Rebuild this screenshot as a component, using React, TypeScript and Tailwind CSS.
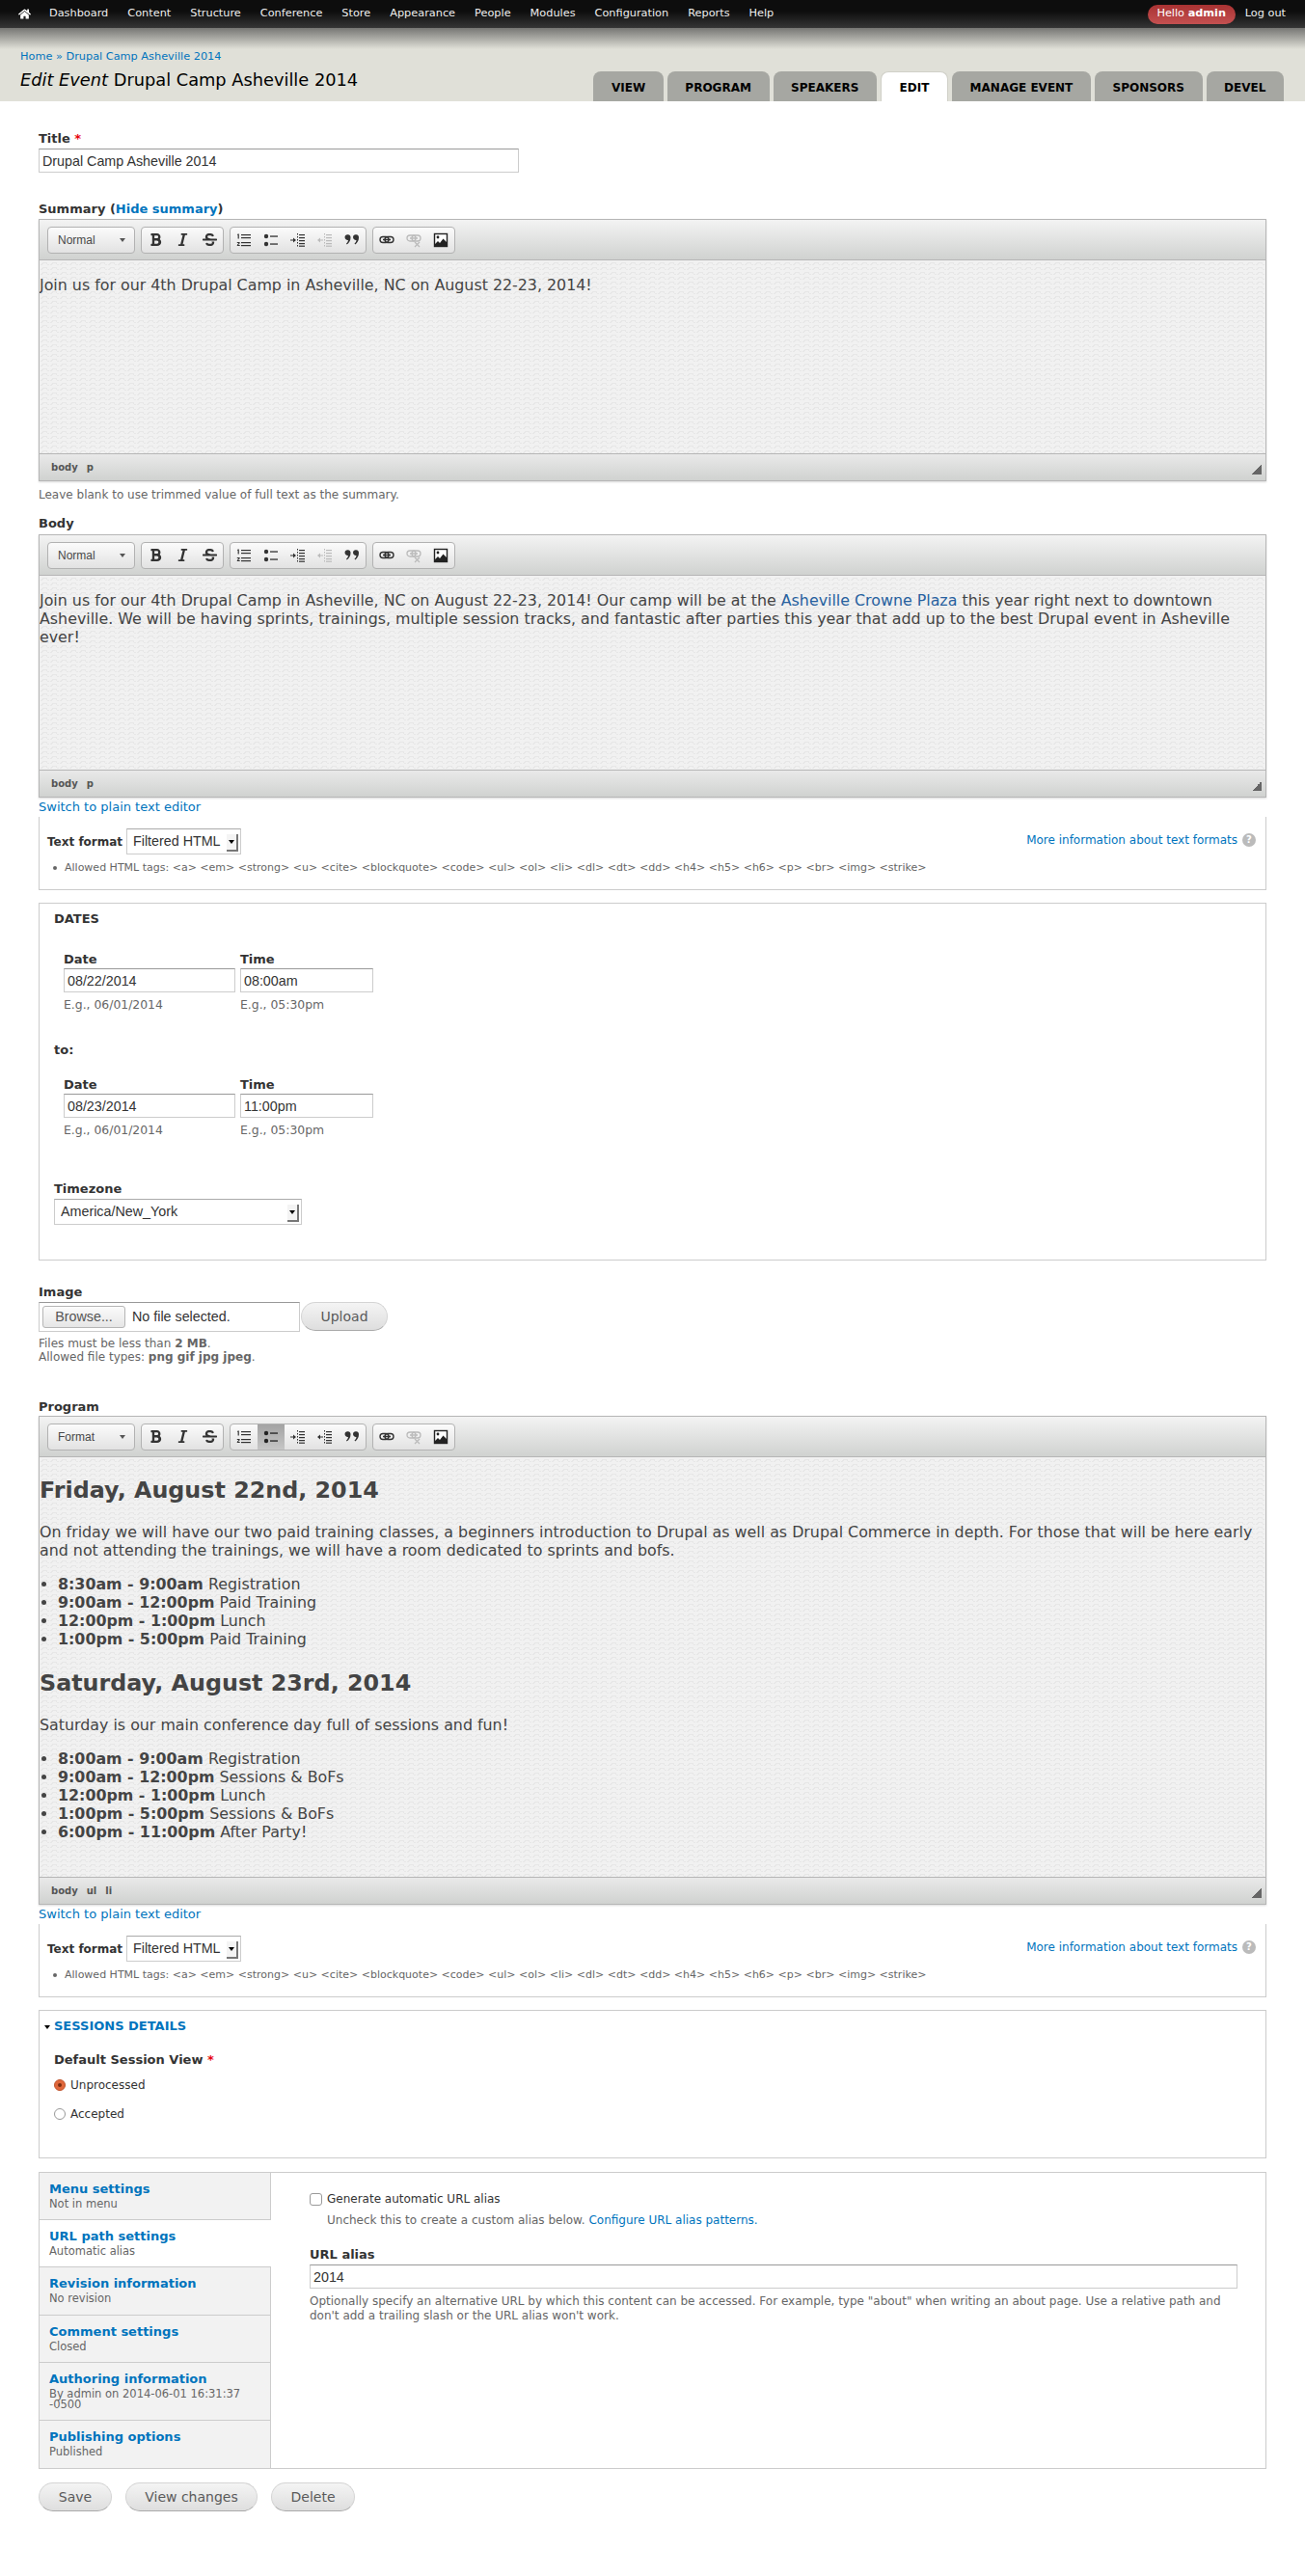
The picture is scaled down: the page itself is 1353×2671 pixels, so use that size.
import type { ReactNode } from 'react';
import { FaBold, FaHome, FaItalic, FaStrikethrough } from 'react-icons/fa';

const navItems = ['Dashboard', 'Content', 'Structure', 'Conference', 'Store', 'Appearance', 'People', 'Modules', 'Configuration', 'Reports', 'Help'];
const tabs = ['VIEW', 'PROGRAM', 'SPEAKERS', 'EDIT', 'MANAGE EVENT', 'SPONSORS', 'DEVEL'];
const allowedTags = 'Allowed HTML tags: <a> <em> <strong> <u> <cite> <blockquote> <code> <ul> <ol> <li> <dl> <dt> <dd> <h4> <h5> <h6> <p> <br> <img> <strike>';

const inputClass = "block h-[25px] border border-[#ccc] border-t-[#999] bg-white px-[3px] font-['Liberation_Sans',sans-serif] text-[14.3px] text-[#333] outline-none";

function Label({ children, className = '' }: { children: ReactNode; className?: string }) {
  return <div className={`text-[13px] leading-[14px] font-bold text-[#333] ${className}`}>{children}</div>;
}

function Hint({ children, className = '' }: { children: ReactNode; className?: string }) {
  return <div className={`text-[12px] leading-[14px] text-[#666] ${className}`}>{children}</div>;
}

function IconList() {
  return (
    <svg width="16" height="16" viewBox="0 0 16 16" fill="currentColor">
      <path d="M1.6 1.5h1.2v5H1.6V2.7L.8 3zM.8 10h2.8v1.2L2 13h1.7v1H.8v-1l1.7-1.9H.8z" />
      <rect x="5" y="2" width="10" height="1.2" /><rect x="5" y="5" width="10" height="1.2" />
      <rect x="5" y="10" width="10" height="1.2" /><rect x="5" y="13" width="10" height="1.2" />
    </svg>
  );
}

function IconBullets() {
  return (
    <svg width="16" height="16" viewBox="0 0 16 16" fill="currentColor">
      <circle cx="3" cy="4" r="2.2" /><circle cx="3" cy="12" r="2.2" />
      <rect x="7" y="3.4" width="8" height="1.3" /><rect x="7" y="11.4" width="8" height="1.3" />
    </svg>
  );
}

function IconIndent({ flip = false }: { flip?: boolean }) {
  return (
    <svg width="16" height="16" viewBox="0 0 16 16" fill="currentColor">
      {flip ? <path d="M0 8l3-2.5V7.4h3v1.2H3v1.9z" /> : <path d="M6 8L3 5.5v1.9H0v1.2h3v1.9z" />}
      <path d="M7 1h1v1.5H7zM7 4h1v1.5H7zM7 7h1v1.5H7zM7 10h1v1.5H7zM7 13h1v1.5H7z" />
      <rect x="9" y="2" width="6" height="1.2" /><rect x="9" y="5" width="6" height="1.2" />
      <rect x="9" y="8" width="6" height="1.2" /><rect x="9" y="11" width="6" height="1.2" /><rect x="9" y="13.6" width="6" height="1.2" />
    </svg>
  );
}

function IconQuote() {
  return (
    <svg width="16" height="16" viewBox="0 0 16 16" fill="currentColor">
      <path d="M.5 5a3 3 0 1 1 6 .4c0 3-1.7 5.6-3.8 7l-.7-.8c1.2-1.1 1.8-2.4 2-3.7A3 3 0 0 1 .5 5z" />
      <path d="M9 5a3 3 0 1 1 6 .4c0 3-1.7 5.6-3.8 7l-.7-.8c1.2-1.1 1.8-2.4 2-3.7A3 3 0 0 1 9 5z" />
    </svg>
  );
}

function IconLink() {
  return (
    <svg width="16" height="16" viewBox="0 0 16 16" fill="none" stroke="currentColor" strokeWidth="1.4">
      <rect x="1" y="4.5" width="9" height="6" rx="3" />
      <rect x="6" y="4.5" width="9" height="6" rx="3" />
      <path d="M4 7.5h8" />
    </svg>
  );
}

function IconUnlink() {
  return (
    <svg width="16" height="16" viewBox="0 0 16 16" fill="none" stroke="currentColor" strokeWidth="1.3">
      <rect x="1" y="3" width="9" height="6" rx="3" />
      <rect x="6" y="3" width="9" height="6" rx="3" />
      <path d="M4 6h8M9 10l5 5M14 10l-5 5" />
    </svg>
  );
}

function IconImage() {
  return (
    <svg width="16" height="16" viewBox="0 0 16 16">
      <rect x="1.5" y="1.5" width="13" height="13" fill="#fff" stroke="#222" strokeWidth="1.4" />
      <circle cx="5" cy="5" r="1.4" fill="#222" />
      <path d="M2 14v-2l3-3 2 2 3.5-4.5L14 10v4z" fill="#222" />
    </svg>
  );
}

function ToolButton({ children, active, disabled }: { children: ReactNode; active?: boolean; disabled?: boolean }) {
  const tone = active
    ? 'bg-[linear-gradient(#a3a3a3,#c6c6c6)] text-[#222]'
    : disabled
      ? 'text-[#bbb]'
      : 'text-[#333]';
  return <span className={`flex h-full w-[28px] items-center justify-center ${tone}`}>{children}</span>;
}

function ToolGroup({ children, className = '' }: { children: ReactNode; className?: string }) {
  return (
    <div className={`flex h-[28px] overflow-hidden rounded-[4px] border border-[#b2b2b2] bg-[linear-gradient(#fbfbfb,#e2e2e2)] ${className}`}>
      {children}
    </div>
  );
}

function Editor({ format, contentHeight, path, program, children }: { format: string; contentHeight: number; path: string[]; program?: boolean; children: ReactNode }) {
  return (
    <div className="border border-[#b6b6b6] shadow-[0_1px_2px_rgba(0,0,0,0.15)]">
      <div className="flex h-[42px] items-center gap-[6px] border-b border-[#b6b6b6] bg-[linear-gradient(#f3f3f3,#d0d2d0)] pl-[8px]">
        <ToolGroup className="w-[91px] items-center justify-between pr-[9px] pl-[10px] font-['Liberation_Sans',sans-serif] text-[12px] text-[#484848]">
          <span>{format}</span>
          <span className="h-0 w-0 border-x-[3.5px] border-t-[4px] border-x-transparent border-t-[#555]" />
        </ToolGroup>
        <ToolGroup>
          <ToolButton><FaBold size={15} /></ToolButton>
          <ToolButton><FaItalic size={15} /></ToolButton>
          <ToolButton><FaStrikethrough size={15} /></ToolButton>
        </ToolGroup>
        <ToolGroup>
          <ToolButton><IconList /></ToolButton>
          <ToolButton active={program}><IconBullets /></ToolButton>
          <ToolButton><IconIndent /></ToolButton>
          <ToolButton disabled={!program}><IconIndent flip /></ToolButton>
          <ToolButton><IconQuote /></ToolButton>
        </ToolGroup>
        <ToolGroup>
          <ToolButton><IconLink /></ToolButton>
          <ToolButton disabled><IconUnlink /></ToolButton>
          <ToolButton><IconImage /></ToolButton>
        </ToolGroup>
      </div>
      <div
        className="overflow-hidden bg-[#f1f1f1] bg-[conic-gradient(from_135deg_at_50%_0,#f1f1f1_90deg,transparent_0),conic-gradient(from_135deg_at_50%_0,#e7e7e7_90deg,transparent_0)] bg-size-[10px_5px] bg-position-[0_2px,0_0] text-[15.85px] leading-[19px] text-[#444]"
        style={{ height: contentHeight }}
      >
        {children}
      </div>
      <div className="relative flex h-[28px] items-center gap-[9px] border-t border-[#b6b6b6] bg-[linear-gradient(#e9e9e9,#d0d2d0)] pl-[12px] text-[10px] font-bold text-[#555]">
        {path.map(item => <span key={item}>{item}</span>)}
        <span className="absolute right-[4px] bottom-[6px] h-[10px] w-[10px] bg-[linear-gradient(135deg,transparent_50%,#666_50%)]" />
      </div>
    </div>
  );
}

function SelectBox({ value, className }: { value: string; className: string }) {
  return (
    <div className={`relative border border-[#ccc] border-t-[#aaa] ${className}`}>
      <select className="h-full w-full appearance-none bg-white pl-[6px] font-['Liberation_Sans',sans-serif] text-[14.3px] text-[#333] outline-none" defaultValue={value}>
        <option>{value}</option>
      </select>
      <span className="absolute top-[5px] right-[2px] flex h-[18px] w-[12px] items-center justify-center border-r-2 border-b-2 border-[#777] bg-[#f4f4f4]">
        <span className="h-0 w-0 border-x-[3px] border-t-[4px] border-x-transparent border-t-black" />
      </span>
    </div>
  );
}

function FilterBox() {
  return (
    <div className="h-[76px] border-x border-b border-[#ccc] pt-[12px] pr-[10px] pl-[8px]">
      <div className="flex items-center">
        <span className="w-[82px] text-[12px] font-bold text-[#333]">Text format</span>
        <SelectBox value="Filtered HTML" className="h-[27px] w-[119px]" />
        <a className="mt-[-4px] ml-auto text-[12px] text-[#0074bd]">More information about text formats</a>
        <span className="mt-[-4px] ml-[5px] flex h-[14px] w-[14px] items-center justify-center rounded-full bg-[#bbb] text-[10px] font-bold text-white">?</span>
      </div>
      <div className="mt-[7px] flex items-center pl-[6px] text-[11px] leading-[14px] text-[#666]">
        <span className="mr-[8px] h-[4px] w-[4px] rounded-full bg-[#666]" />
        <span>{allowedTags}</span>
      </div>
    </div>
  );
}

function DateFields({ date, time, className = '' }: { date: string; time: string; className?: string }) {
  return (
    <div className={`flex gap-[5px] pl-[25px] ${className}`}>
      <div>
        <Label>Date</Label>
        <input className={`${inputClass} mt-[2px] w-[178px]`} defaultValue={date} />
        <div className="mt-[6px] text-[12.4px] leading-[14px] text-[#666]">E.g., 06/01/2014</div>
      </div>
      <div>
        <Label>Time</Label>
        <input className={`${inputClass} mt-[2px] w-[138px]`} defaultValue={time} />
        <div className="mt-[6px] text-[12.4px] leading-[14px] text-[#666]">E.g., 05:30pm</div>
      </div>
    </div>
  );
}

function Pill({ children, className = '' }: { children: ReactNode; className?: string }) {
  return (
    <button className={`h-[30px] rounded-[15px] border border-[#d4d4d4] border-b-[#aaa] bg-[linear-gradient(#f4f4f4,#dedede)] text-[14px] text-[#5a5a5a] ${className}`}>
      {children}
    </button>
  );
}

function SideTab({ title, sub, active, last, height }: { title: string; sub: ReactNode; active?: boolean; last?: boolean; height: number }) {
  return (
    <div
      className={`border-[#ccc] pt-[10px] pl-[10px] ${last ? '' : 'border-b'} ${active ? 'bg-white' : 'border-r bg-[#f2f2f2]'}`}
      style={{ height }}
    >
      <div className="text-[13px] leading-[14px] font-bold text-[#0074bd]">{title}</div>
      <div className="mt-[3px] text-[11.5px] leading-[11px] text-[#666]">{sub}</div>
    </div>
  );
}

function ListRow({ time, text }: { time: string; text: string }) {
  return <li><strong>{time}</strong> {text}</li>;
}

export default function App() {
  return (
    <div className="min-h-[2671px] bg-white font-['DejaVu_Sans',sans-serif] text-[#333]">
      {/* toolbar */}
      <div className="flex h-[29px] items-center bg-[linear-gradient(#0d0d0d_40%,#353535)] pr-[20px] pl-[19px] text-[11.3px] text-[#eee]">
        <FaHome size={13} className="mr-[19px] text-white" />
        <div className="flex gap-[20px]">
          {navItems.map(item => <span key={item}>{item}</span>)}
        </div>
        <span className="ml-auto flex h-[20px] w-[91px] items-center justify-center rounded-[10px] bg-[linear-gradient(#a93232,#c45050)] text-white">
          Hello&nbsp;<b>admin</b>
        </span>
        <span className="ml-[10px]">Log out</span>
      </div>

      {/* page header */}
      <div className="flex h-[76px] items-end justify-between bg-[#e0e0d8] bg-[linear-gradient(#767673,#e0e0d8_22px)] pr-[22px] pl-[21px]">
        <div className="pb-[10px]">
          <div className="text-[11.3px] leading-[14px] text-[#0074bd]">Home » Drupal Camp Asheville 2014</div>
          <h1 className="mt-[5px] text-[17.8px] leading-[24px] text-black"><em>Edit Event</em> Drupal Camp Asheville 2014</h1>
        </div>
        <div className="flex gap-[4px]">
          {tabs.map(tab => (
            <div
              key={tab}
              className={`flex h-[31px] items-center rounded-t-[8px] px-[18.6px] pt-[2px] text-[12px] font-bold text-black ${tab === 'EDIT' ? 'border-x border-t border-[#d0d0c8] bg-white' : 'bg-[#a6a7a2]'}`}
            >
              {tab}
            </div>
          ))}
        </div>
      </div>

      <div className="px-[40px] pb-[67px]">
        <Label className="mt-[32px]">Title <span className="text-red-600">*</span></Label>
        <input className={`${inputClass} mt-[3px] w-[498px]`} defaultValue="Drupal Camp Asheville 2014" />

        <Label className="mt-[31px]">Summary (<a className="text-[#0074bd]">Hide summary</a>)</Label>
        <div className="mt-[3px]">
          <Editor format="Normal" contentHeight={200} path={['body', 'p']}>
            <p className="mt-[16px]">Join us for our 4th Drupal Camp in Asheville, NC on August 22-23, 2014!</p>
          </Editor>
        </div>
        <Hint className="mt-[7px]">Leave blank to use trimmed value of full text as the summary.</Hint>

        <Label className="mt-[16px]">Body</Label>
        <div className="mt-[4px]">
          <Editor format="Normal" contentHeight={201} path={['body', 'p']}>
            <p className="mt-[16px]">
              Join us for our 4th Drupal Camp in Asheville, NC on August 22-23, 2014! Our camp will be at the <a className="text-[#27619f]">Asheville Crowne Plaza</a> this year right next to downtown Asheville. We will be having sprints, trainings, multiple session tracks, and fantastic after parties this year that add up to the best Drupal event in Asheville ever!
            </p>
          </Editor>
        </div>
        <a className="block h-[20px] text-[13px] leading-[20px] text-[#0074bd]">Switch to plain text editor</a>
        <FilterBox />

        {/* dates */}
        <fieldset className="mt-[13px] border border-[#ccc] pt-[9px] pb-[36px] pl-[15px]">
          <Label className="uppercase">Dates</Label>
          <DateFields date="08/22/2014" time="08:00am" className="mt-[28px] -ml-[15px]" />
          <Label className="mt-[33px]">to:</Label>
          <DateFields date="08/23/2014" time="11:00pm" className="mt-[22px] -ml-[15px]" />
          <Label className="mt-[47px]">Timezone</Label>
          <SelectBox value="America/New_York" className="mt-[3px] h-[27px] w-[257px]" />
        </fieldset>

        {/* image */}
        <Label className="mt-[26px]">Image</Label>
        <div className="mt-[3px] flex">
          <div className="flex h-[31px] w-[271px] items-center border border-[#ccc] border-t-[#999] pl-[3px] font-['Liberation_Sans',sans-serif] text-[14.3px] text-[#333]">
            <span className="flex h-[23px] w-[86px] items-center justify-center rounded-[3px] border border-[#b5b5b5] bg-[linear-gradient(#fbfbfb,#e6e6e6)] text-[#555]">Browse...</span>
            <span className="ml-[7px]">No file selected.</span>
          </div>
          <Pill className="ml-px w-[90px]">Upload</Pill>
        </div>
        <Hint className="mt-[5px]">
          Files must be less than <b>2 MB</b>.<br />
          Allowed file types: <b>png gif jpg jpeg</b>.
        </Hint>

        <Label className="mt-[38px]">Program</Label>
        <div className="mt-[2px]">
          <Editor format="Format" contentHeight={435} path={['body', 'ul', 'li']} program>
            <h2 className="mt-[20px] text-[23.8px] leading-[28px] font-bold">Friday, August 22nd, 2014</h2>
            <p className="mt-[20px]">
              On friday we will have our two paid training classes, a beginners introduction to Drupal as well as Drupal Commerce in depth. For those that will be here early and not attending the trainings, we will have a room dedicated to sprints and bofs.
            </p>
            <ul className="mt-[16px] list-disc pl-[19px]">
              <ListRow time="8:30am - 9:00am" text="Registration" />
              <ListRow time="9:00am - 12:00pm" text="Paid Training" />
              <ListRow time="12:00pm - 1:00pm" text="Lunch" />
              <ListRow time="1:00pm - 5:00pm" text="Paid Training" />
            </ul>
            <h2 className="mt-[22px] text-[23.8px] leading-[28px] font-bold">Saturday, August 23rd, 2014</h2>
            <p className="mt-[20px]">Saturday is our main conference day full of sessions and fun!</p>
            <ul className="mt-[16px] list-disc pl-[19px]">
              <ListRow time="8:00am - 9:00am" text="Registration" />
              <ListRow time="9:00am - 12:00pm" text="Sessions & BoFs" />
              <ListRow time="12:00pm - 1:00pm" text="Lunch" />
              <ListRow time="1:00pm - 5:00pm" text="Sessions & BoFs" />
              <ListRow time="6:00pm - 11:00pm" text="After Party!" />
            </ul>
          </Editor>
        </div>
        <a className="block h-[20px] text-[13px] leading-[20px] text-[#0074bd]">Switch to plain text editor</a>
        <FilterBox />

        {/* sessions */}
        <fieldset className="mt-[13px] border border-[#ccc] pt-[9px] pb-[38px] pl-[15px]">
          <div className="relative text-[13px] leading-[14px] font-bold text-[#0074bd] uppercase">
            <span className="absolute top-[6px] -left-[10px] h-0 w-0 border-x-[3.5px] border-t-[4px] border-x-transparent border-t-black" />
            Sessions details
          </div>
          <Label className="mt-[21px]">Default Session View <span className="text-red-600">*</span></Label>
          <div className="mt-[12px] flex items-center text-[12px] leading-[14px]">
            <span className="mr-[5px] flex h-[12px] w-[12px] items-center justify-center rounded-full border border-[#c0562f] bg-[#e0673b]">
              <span className="h-[4px] w-[4px] rounded-full bg-[#7a2e12]" />
            </span>
            Unprocessed
          </div>
          <div className="mt-[16px] flex items-center text-[12px] leading-[14px]">
            <span className="mr-[5px] h-[12px] w-[12px] rounded-full border border-[#999] bg-white" />
            Accepted
          </div>
        </fieldset>

        {/* vertical tabs */}
        <div className="mt-[14px] flex h-[308px] border border-[#ccc]">
          <div className="w-[240px] shrink-0">
            <SideTab title="Menu settings" sub="Not in menu" height={49} />
            <SideTab title="URL path settings" sub="Automatic alias" active height={49} />
            <SideTab title="Revision information" sub="No revision" height={50} />
            <SideTab title="Comment settings" sub="Closed" height={49} />
            <SideTab title="Authoring information" sub="By admin on 2014-06-01 16:31:37 -0500" height={60} />
            <SideTab title="Publishing options" sub="Published" last height={49} />
          </div>
          <div className="flex-1 pt-[20px] pl-[40px] text-[12px] leading-[14px]">
            <div className="flex items-center gap-[5px]">
              <span className="h-[13px] w-[13px] rounded-[3px] border border-[#999] bg-white" />
              Generate automatic URL alias
            </div>
            <div className="mt-[8px] pl-[18px] text-[#666]">
              Uncheck this to create a custom alias below. <a className="text-[#0074bd]">Configure URL alias patterns.</a>
            </div>
            <Label className="mt-[22px]">URL alias</Label>
            <input className={`${inputClass} mt-[3px] w-[962px]`} defaultValue="2014" />
            <div className="mt-[6px] w-[962px] leading-[15px] text-[#666]">
              Optionally specify an alternative URL by which this content can be accessed. For example, type "about" when writing an about page. Use a relative path and don't add a trailing slash or the URL alias won't work.
            </div>
          </div>
        </div>

        <div className="mt-[14px] flex gap-[14px]">
          <Pill className="w-[76px]">Save</Pill>
          <Pill className="w-[137px]">View changes</Pill>
          <Pill className="w-[87px]">Delete</Pill>
        </div>
      </div>
    </div>
  );
}
